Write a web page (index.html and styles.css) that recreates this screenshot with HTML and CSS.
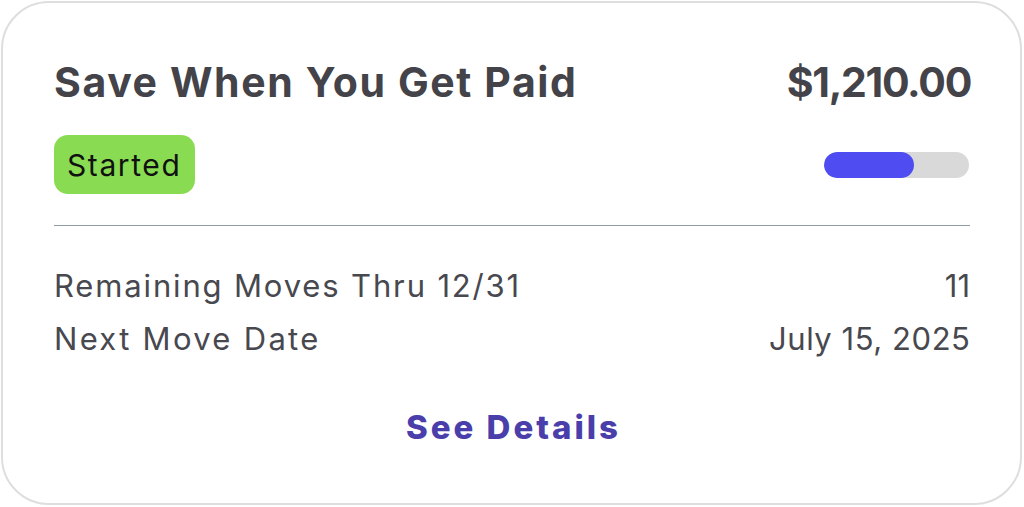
FILE: index.html
```html
<!DOCTYPE html>
<html lang="en">
<head>
<meta charset="utf-8">
<title>Save When You Get Paid</title>
<link rel="stylesheet" href="styles.css">
</head>
<body>
<div class="card">
  <div class="header">
    <h1 class="title">Save When You Get Paid</h1>
    <div class="amount">$1,210.00</div>
  </div>
  <div class="status-row">
    <span class="badge">Started</span>
    <div class="progress"><div class="progress-fill" style="width: 62%"></div></div>
  </div>
  <div class="divider"></div>
  <div class="info-row">
    <span class="label">Remaining Moves Thru 12/31</span>
    <span class="value">11</span>
  </div>
  <div class="info-row">
    <span class="label label-short">Next Move Date</span>
    <span class="value value-date">July 15, 2025</span>
  </div>
  <div class="footer">
    <a class="details-link" href="#">See Details</a>
  </div>
</div>
</body>
</html>
```

FILE: styles.css
```css
* { box-sizing: border-box; }

html, body {
  margin: 0;
  padding: 0;
  background: #ffffff;
}

body {
  font-family: Inter, "Noto Sans", "DejaVu Sans", sans-serif;
  color: #48484f;
}

.card {
  width: 1021px;
  height: 504px;
  margin: 1px 0 0 1px;
  border: 2px solid #dedede;
  border-radius: 48px;
  background: #ffffff;
  padding: 55px 50px 0 51px;
  display: flex;
  flex-direction: column;
}

.header {
  display: flex;
  justify-content: space-between;
  align-items: baseline;
}

.title {
  margin: 0;
  font-size: 41px;
  line-height: 48px;
  font-weight: 700;
  letter-spacing: 1.6px;
  color: #434349;
}

.amount {
  font-size: 41px;
  line-height: 48px;
  font-weight: 700;
  letter-spacing: -1.3px;
  margin-right: -1px;
  color: #434349;
}

.status-row {
  display: flex;
  justify-content: space-between;
  align-items: center;
  margin-top: 29px;
}

.badge {
  display: inline-flex;
  align-items: center;
  height: 59px;
  padding: 0 14px 0 13px;
  background: #89dc52;
  border-radius: 14px;
  font-size: 30px;
  letter-spacing: 1.6px;
  color: #111111;
}

.progress {
  width: 145px;
  height: 26px;
  margin-right: 1px;
  border-radius: 13px;
  background: #d9d9d9;
  overflow: hidden;
}

.progress-fill {
  height: 100%;
  border-radius: 13px;
  background: #4f4df2;
}

.divider {
  margin-top: 31px;
  border-top: 1px solid #8f9ca8;
}

.info-row {
  display: flex;
  justify-content: space-between;
  font-size: 31px;
  line-height: 53px;
}

.label {
  letter-spacing: 1.85px;
}

.label-short {
  letter-spacing: 2.3px;
}

.value-date {
  letter-spacing: 0.55px;
  margin-right: -0.5px;
}

.divider + .info-row {
  margin-top: 33px;
}

.footer {
  display: flex;
  justify-content: center;
  margin-top: 42px;
}

.details-link {
  font-size: 33px;
  line-height: 40px;
  font-weight: 800;
  letter-spacing: 3px;
  margin-right: -3px;
  color: #4a3eab;
  text-decoration: none;
}
```
